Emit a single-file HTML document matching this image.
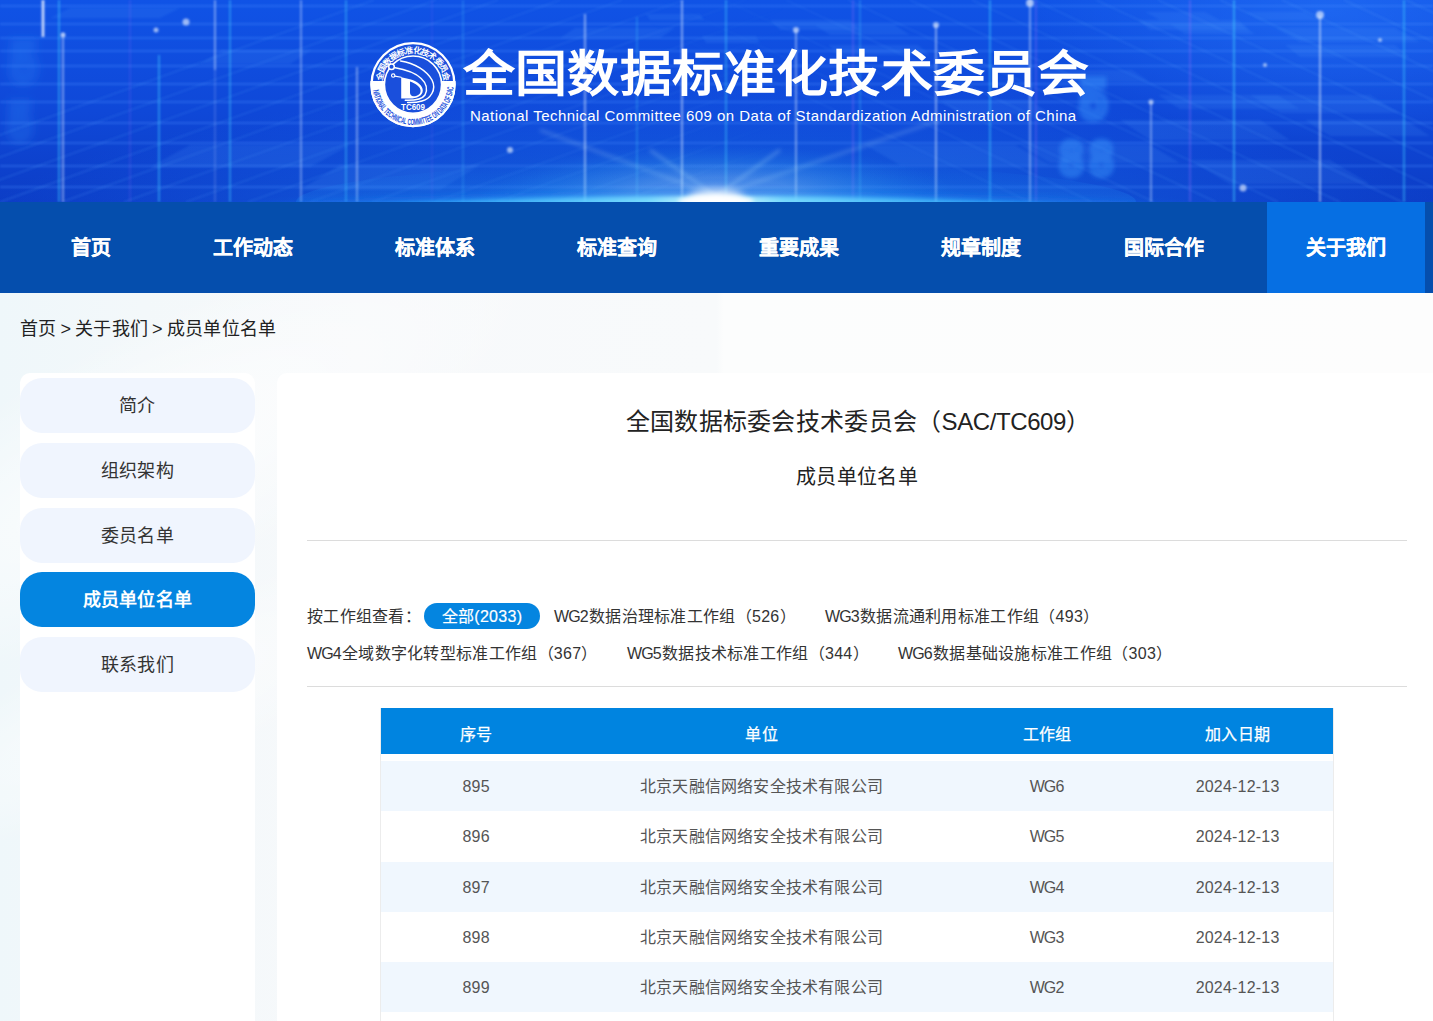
<!DOCTYPE html>
<html lang="zh-CN"><head><meta charset="utf-8">
<style>
*{margin:0;padding:0;box-sizing:border-box}
html,body{width:1433px;height:1021px;overflow:hidden}
body{font-family:"Liberation Sans",sans-serif;background:#f4f7fb;position:relative;color:#333}
.abs{position:absolute}
#hdr{left:0;top:0;width:1433px;height:202px;overflow:hidden;
 background:linear-gradient(180deg,#1650e4 0%,#1244d6 45%,#0f3cc8 100%)}
#nav{left:0;top:202px;width:1433px;height:91px;background:#054ead}
.ni{position:absolute;top:0;height:91px;line-height:93.5px;color:#fff;font-weight:bold;font-size:20px;text-align:center;-webkit-text-stroke:0.2px #fff}
#body{left:0;top:293px;width:1433px;height:728px;background:linear-gradient(90deg,#eff7fa 0%,#f3f8fa 10%,#f7f9fb 25%,#f8fafb 50%,#fcfdfd 50.5%,#fdfdfd 100%)}
.crumb{left:20px;top:315.5px;font-size:18px;letter-spacing:0.3px;color:#222;line-height:26px;white-space:nowrap;word-spacing:-1.5px}
#side{left:20px;top:373px;width:235px;height:660px;background:#fff;border-radius:10px}
.sb{position:absolute;left:20px;width:235px;height:55px;border-radius:22px;background:#f0f5fe;color:#333;font-size:18px;letter-spacing:0.3px;text-align:center;line-height:57px}
.sb.on{background:#0485e0;color:#fff;font-weight:bold}
#main{left:277px;top:373px;width:1170px;height:660px;background:#fff;border-radius:10px}
.hr{position:absolute;left:307px;width:1100px;height:1px;background:#dcdcdc}
.f{position:absolute;font-size:16px;letter-spacing:0.3px;color:#333;line-height:26px;white-space:nowrap}
.pill{position:absolute;left:424px;top:603px;width:116px;height:26px;border-radius:13px;background:#0485e0;color:#fff;font-size:16px;letter-spacing:0.3px;line-height:27.5px;text-align:center;-webkit-text-stroke:0.2px #fff}
#tbl{left:380px;top:708px;width:954px;height:320px}
.th{position:absolute;left:381px;top:708px;width:952px;height:46px;background:#0084e0}
.row{position:absolute;left:381px;width:952px;height:50px}
.c{position:absolute;top:0;height:100%;text-align:center;font-size:16px;white-space:nowrap;letter-spacing:0.2px;text-indent:0.2px}
.th .c{color:#fff;font-weight:normal;line-height:53px;-webkit-text-stroke:0.25px #fff}
.row .c{color:#555;line-height:52px}
.c1{left:0;width:190px}.c2{left:190px;width:381px}.c3{left:571px;width:190px}.c4{left:761px;width:191px}
.wg{letter-spacing:-0.9px}
</style></head><body>
<div id="hdr" class="abs"><svg width="1433" height="202" style="position:absolute;left:0;top:0">
<defs>
<linearGradient id="bg" x1="0" y1="0" x2="0" y2="1">
<stop offset="0" stop-color="#1053e6"/><stop offset="0.55" stop-color="#0f48d8"/><stop offset="1" stop-color="#0c3dc6"/></linearGradient>
<radialGradient id="gC" cx="0.5" cy="0.5" r="0.5"><stop offset="0" stop-color="#1f9bff" stop-opacity="0.75"/><stop offset="0.5" stop-color="#1a7af0" stop-opacity="0.35"/><stop offset="1" stop-color="#1a6cff" stop-opacity="0"/></radialGradient>
<radialGradient id="gT" cx="0.5" cy="0.5" r="0.5"><stop offset="0" stop-color="#2d7dff" stop-opacity="0.45"/><stop offset="1" stop-color="#2d7dff" stop-opacity="0"/></radialGradient>
<radialGradient id="gW" cx="0.5" cy="0.5" r="0.5"><stop offset="0" stop-color="#ffffff" stop-opacity="1"/><stop offset="0.35" stop-color="#d8fbff" stop-opacity="0.9"/><stop offset="0.7" stop-color="#5fd6ff" stop-opacity="0.45"/><stop offset="1" stop-color="#2fb0ff" stop-opacity="0"/></radialGradient>
<linearGradient id="vfade" x1="0" y1="0" x2="0" y2="1"><stop offset="0" stop-color="#fff" stop-opacity="1"/><stop offset="1" stop-color="#fff" stop-opacity="0.25"/></linearGradient>
<filter id="bl" x="-50%" y="-50%" width="200%" height="200%"><feGaussianBlur stdDeviation="0.9"/></filter>
<filter id="bl2" x="-50%" y="-50%" width="200%" height="200%"><feGaussianBlur stdDeviation="2"/></filter>
<filter id="bl4" x="-50%" y="-50%" width="200%" height="200%"><feGaussianBlur stdDeviation="4"/></filter>
</defs>
<rect width="1433" height="202" fill="url(#bg)"/>
<ellipse cx="1330" cy="10" rx="300" ry="130" fill="url(#gT)"/>
<ellipse cx="716" cy="250" rx="760" ry="170" fill="url(#gC)"/>
<g stroke="#4a90ff" stroke-opacity="0.33" stroke-width="1.8" filter="url(#bl)"><line x1="0" y1="6" x2="1433" y2="6"/><line x1="0" y1="24" x2="1433" y2="24"/><line x1="0" y1="38" x2="1433" y2="38"/><line x1="0" y1="51" x2="1433" y2="51"/><line x1="0" y1="66" x2="1433" y2="66"/><line x1="0" y1="84" x2="1433" y2="84"/><line x1="0" y1="102" x2="1433" y2="102"/><line x1="0" y1="123" x2="1433" y2="123"/><line x1="0" y1="143" x2="1433" y2="143"/><line x1="0" y1="166" x2="1433" y2="166"/><line x1="0" y1="187" x2="1433" y2="187"/></g>
<defs><linearGradient id="mL" x1="0" y1="0" x2="1" y2="0"><stop offset="0" stop-color="#fff" stop-opacity="1"/><stop offset="0.45" stop-color="#fff" stop-opacity="0.6"/><stop offset="0.55" stop-color="#fff" stop-opacity="0"/></linearGradient><mask id="maskL"><rect width="1433" height="202" fill="url(#mL)"/></mask><linearGradient id="mR" x1="0" y1="0" x2="1" y2="0"><stop offset="0.45" stop-color="#fff" stop-opacity="0"/><stop offset="0.6" stop-color="#fff" stop-opacity="0.6"/><stop offset="1" stop-color="#fff" stop-opacity="1"/></linearGradient><mask id="maskR"><rect width="1433" height="202" fill="url(#mR)"/></mask></defs>
<g stroke="#5aa6ff" stroke-opacity="0.22" stroke-width="1.4" filter="url(#bl)" mask="url(#maskL)"><line x1="-186" y1="202" x2="374" y2="0"/><line x1="-124" y1="202" x2="436" y2="0"/><line x1="-62" y1="202" x2="498" y2="0"/><line x1="0" y1="202" x2="560" y2="0"/><line x1="62" y1="202" x2="622" y2="0"/><line x1="124" y1="202" x2="684" y2="0"/><line x1="186" y1="202" x2="746" y2="0"/><line x1="248" y1="202" x2="808" y2="0"/><line x1="310" y1="202" x2="870" y2="0"/><line x1="372" y1="202" x2="932" y2="0"/><line x1="434" y1="202" x2="994" y2="0"/><line x1="496" y1="202" x2="1056" y2="0"/><line x1="558" y1="202" x2="1118" y2="0"/><line x1="620" y1="202" x2="1180" y2="0"/><line x1="682" y1="202" x2="1242" y2="0"/><line x1="744" y1="202" x2="1304" y2="0"/><line x1="806" y1="202" x2="1366" y2="0"/><line x1="868" y1="202" x2="1428" y2="0"/><line x1="930" y1="202" x2="1490" y2="0"/></g>
<g stroke="#5aa6ff" stroke-opacity="0.22" stroke-width="1.4" filter="url(#bl)" mask="url(#maskR)"><line x1="600" y1="0" x2="1030" y2="202"/><line x1="662" y1="0" x2="1092" y2="202"/><line x1="724" y1="0" x2="1154" y2="202"/><line x1="786" y1="0" x2="1216" y2="202"/><line x1="848" y1="0" x2="1278" y2="202"/><line x1="910" y1="0" x2="1340" y2="202"/><line x1="972" y1="0" x2="1402" y2="202"/><line x1="1034" y1="0" x2="1464" y2="202"/><line x1="1096" y1="0" x2="1526" y2="202"/><line x1="1158" y1="0" x2="1588" y2="202"/><line x1="1220" y1="0" x2="1650" y2="202"/><line x1="1282" y1="0" x2="1712" y2="202"/><line x1="1344" y1="0" x2="1774" y2="202"/><line x1="1406" y1="0" x2="1836" y2="202"/><line x1="1468" y1="0" x2="1898" y2="202"/><line x1="1530" y1="0" x2="1960" y2="202"/><line x1="1592" y1="0" x2="2022" y2="202"/><line x1="1654" y1="0" x2="2084" y2="202"/><line x1="1716" y1="0" x2="2146" y2="202"/><line x1="1778" y1="0" x2="2208" y2="202"/><line x1="1840" y1="0" x2="2270" y2="202"/><line x1="1902" y1="0" x2="2332" y2="202"/></g>
<g fill="#56a6ff" fill-opacity="0.13" filter="url(#bl)"><polygon points="50,18 160,18 180,8 70,8"/><polygon points="200,64 290,64 312,50 222,50"/><polygon points="150,167 310,167 350,145 190,145"/><polygon points="300,190 440,190 480,165 340,165"/><polygon points="560,38 660,38 675,28 575,28"/><polygon points="830,35 910,35 895,25 815,25"/><polygon points="1160,20 1220,20 1205,12 1145,12"/><polygon points="1260,20 1320,20 1305,12 1245,12"/><polygon points="1185,34 1255,34 1240,24 1170,24"/><polygon points="1300,42 1420,42 1395,28 1275,28"/><polygon points="1150,140 1290,140 1260,120 1120,120"/><polygon points="1280,113 1400,113 1370,95 1250,95"/><polygon points="900,165 1050,165 1015,145 865,145"/><polygon points="1230,184 1370,184 1330,160 1190,160"/><polygon points="1150,30 1250,30 1238,20 1138,20"/><polygon points="1300,57 1410,57 1395,45 1285,45"/><polygon points="1060,82 1150,82 1132,70 1042,70"/><polygon points="1180,109 1300,109 1278,95 1158,95"/><polygon points="1330,136 1430,136 1405,120 1305,120"/><polygon points="960,114 1050,114 1030,100 940,100"/><polygon points="1050,163 1180,163 1150,145 1020,145"/><polygon points="650,20 704,20 700,14 646,14"/><polygon points="706,43 760,43 756,36 702,36"/><polygon points="780,30 860,30 850,20 770,20"/><polygon points="840,55 930,55 918,45 828,45"/></g>
<g font-family="Liberation Sans" font-weight="bold" fill="none" stroke="#3c9cff" stroke-opacity="0.42" stroke-width="6" filter="url(#bl2)"><text transform="translate(1080,118) scale(1.0,1.15)" font-size="48">5</text><text transform="translate(1060,175) scale(0.85,1.0)" font-size="48">8</text><text transform="translate(1090,175) scale(0.85,1.0)" font-size="48">8</text></g>
<g font-family="Liberation Sans" font-weight="bold" fill="none" stroke="#3c9cff" stroke-opacity="0.22" stroke-width="6" filter="url(#bl4)"><text transform="translate(10,82) scale(1,1.2)" font-size="48">5</text><text transform="translate(8,140) scale(0.9,1.1)" font-size="48">5</text></g>
<g filter="url(#bl)"><line x1="43" y1="0" x2="43" y2="37" stroke="#f0f6ff" stroke-opacity="0.85" stroke-width="2.6"/><line x1="59" y1="0" x2="59" y2="202" stroke="#40c8ff" stroke-opacity="0.5" stroke-width="1.9"/><line x1="63" y1="33" x2="63" y2="202" stroke="#d8e6ff" stroke-opacity="0.5" stroke-width="1.9"/><line x1="130" y1="0" x2="130" y2="202" stroke="#9a6cff" stroke-opacity="0.18" stroke-width="1.7999999999999998"/><line x1="159" y1="55" x2="159" y2="202" stroke="#39c5ff" stroke-opacity="0.5" stroke-width="1.9"/><line x1="215" y1="0" x2="215" y2="70" stroke="#d0e0ff" stroke-opacity="0.5" stroke-width="1.9"/><line x1="215" y1="70" x2="215" y2="202" stroke="#d0e0ff" stroke-opacity="0.18" stroke-width="1.7999999999999998"/><line x1="230" y1="0" x2="230" y2="202" stroke="#40c8ff" stroke-opacity="0.45" stroke-width="1.9"/><line x1="301" y1="0" x2="301" y2="202" stroke="#c8dcff" stroke-opacity="0.45" stroke-width="1.9"/><line x1="346" y1="0" x2="346" y2="202" stroke="#40c8ff" stroke-opacity="0.45" stroke-width="1.9"/><line x1="357" y1="67" x2="357" y2="202" stroke="#c8dcff" stroke-opacity="0.5" stroke-width="1.9"/><line x1="432" y1="0" x2="432" y2="202" stroke="#9a6cff" stroke-opacity="0.12" stroke-width="1.7999999999999998"/><line x1="463" y1="0" x2="463" y2="202" stroke="#40c8ff" stroke-opacity="0.25" stroke-width="1.7999999999999998"/><line x1="585" y1="14" x2="585" y2="202" stroke="#d8e6ff" stroke-opacity="0.5" stroke-width="2.1"/><line x1="637" y1="17" x2="637" y2="202" stroke="#40c8ff" stroke-opacity="0.3" stroke-width="1.7999999999999998"/><line x1="682" y1="0" x2="682" y2="202" stroke="#d8e6ff" stroke-opacity="0.5" stroke-width="2.1"/><line x1="726" y1="0" x2="726" y2="202" stroke="#40c8ff" stroke-opacity="0.45" stroke-width="1.9"/><line x1="796" y1="30" x2="796" y2="202" stroke="#e0ecff" stroke-opacity="0.45" stroke-width="1.9"/><line x1="853" y1="0" x2="853" y2="202" stroke="#9a6cff" stroke-opacity="0.3" stroke-width="1.7999999999999998"/><line x1="860" y1="0" x2="860" y2="202" stroke="#40c8ff" stroke-opacity="0.3" stroke-width="1.7999999999999998"/><line x1="936" y1="25" x2="936" y2="202" stroke="#e0ecff" stroke-opacity="0.5" stroke-width="1.9"/><line x1="990" y1="0" x2="990" y2="202" stroke="#40c8ff" stroke-opacity="0.5" stroke-width="1.9"/><line x1="1030" y1="0" x2="1030" y2="202" stroke="#e0ecff" stroke-opacity="0.45" stroke-width="1.9"/><line x1="1036" y1="0" x2="1036" y2="202" stroke="#9a6cff" stroke-opacity="0.3" stroke-width="1.7999999999999998"/><line x1="1151" y1="102" x2="1151" y2="202" stroke="#d0e0ff" stroke-opacity="0.45" stroke-width="1.9"/><line x1="1190" y1="0" x2="1190" y2="202" stroke="#9a6cff" stroke-opacity="0.35" stroke-width="1.7999999999999998"/><line x1="1234" y1="0" x2="1234" y2="202" stroke="#40c8ff" stroke-opacity="0.55" stroke-width="1.9"/><line x1="1320" y1="15" x2="1320" y2="202" stroke="#e0ecff" stroke-opacity="0.55" stroke-width="1.9"/><line x1="1404" y1="0" x2="1404" y2="202" stroke="#40c8ff" stroke-opacity="0.5" stroke-width="1.9"/></g>
<g fill="#e4eeff" fill-opacity="0.65" filter="url(#bl)"><circle cx="186" cy="22" r="3.5"/><circle cx="156" cy="30" r="2.5"/><circle cx="63" cy="35" r="2.5"/><circle cx="1030" cy="3" r="4"/><circle cx="1320" cy="15" r="4"/><circle cx="936" cy="25" r="3"/><circle cx="796" cy="30" r="3"/><circle cx="1151" cy="102" r="2.5"/><circle cx="1243" cy="188" r="3.5"/><circle cx="1380" cy="40" r="2"/><circle cx="1265" cy="65" r="2"/><circle cx="510" cy="150" r="3"/></g>
<g stroke="#c8f0ff" stroke-width="2" filter="url(#bl2)">
<line x1="716" y1="196" x2="540" y2="130" stroke-opacity="0.3"/><line x1="716" y1="196" x2="650" y2="150" stroke-opacity="0.4"/>
<line x1="716" y1="196" x2="780" y2="150" stroke-opacity="0.4"/><line x1="716" y1="196" x2="940" y2="120" stroke-opacity="0.3"/>
</g>
<defs><linearGradient id="hz" x1="0" y1="0" x2="1" y2="0"><stop offset="0" stop-color="#3fc0ff" stop-opacity="0"/><stop offset="0.25" stop-color="#3fc8ff" stop-opacity="0.55"/><stop offset="0.44" stop-color="#7ee2ff" stop-opacity="0.9"/><stop offset="0.5" stop-color="#e8fcff" stop-opacity="1"/><stop offset="0.56" stop-color="#7ee2ff" stop-opacity="0.9"/><stop offset="0.75" stop-color="#3fc8ff" stop-opacity="0.55"/><stop offset="1" stop-color="#3fc0ff" stop-opacity="0"/></linearGradient></defs>
<ellipse cx="716" cy="195" rx="240" ry="50" fill="url(#gW)" opacity="0.28"/>
<defs><linearGradient id="bt" x1="0" y1="0" x2="0" y2="1"><stop offset="0" stop-color="#1f8cf5" stop-opacity="0"/><stop offset="1" stop-color="#2aa0ff" stop-opacity="0.45"/></linearGradient></defs><ellipse cx="716" cy="202" rx="420" ry="40" fill="url(#bt)"/>
<ellipse cx="716" cy="238" rx="640" ry="44" fill="#2f9cff" fill-opacity="0.35" filter="url(#bl4)"/>
<ellipse cx="716" cy="236" rx="560" ry="40" fill="url(#hz)" filter="url(#bl2)"/>
<ellipse cx="716" cy="201" rx="38" ry="5" fill="#ffffff" fill-opacity="0.95" filter="url(#bl2)"/>
<ellipse cx="716" cy="198" rx="28" ry="9" fill="#ffffff" fill-opacity="0.8" filter="url(#bl4)"/>
</svg><svg width="1433" height="202" style="position:absolute;left:0;top:0">
<defs>
<clipPath id="lowc"><rect x="360" y="81" width="110" height="60"/></clipPath>
<path id="arcTop" d="M 381.62,85.70 A 31.4 31.4 0 1 1 444.38,85.70"/>
<path id="arcBot" d="M 372.41,85.31 A 40.6 40.6 0 0 0 453.59,85.31"/>
</defs>
<circle cx="413" cy="84.6" r="42.6" fill="#1a4fdc"/>
<g clip-path="url(#lowc)"><circle cx="413" cy="84.6" r="35.7" fill="none" stroke="#fff" stroke-width="14"/></g>
<circle cx="413" cy="84.6" r="41.5" fill="none" stroke="#fff" stroke-width="2.3"/>
<circle cx="413" cy="84.6" r="28.6" fill="none" stroke="#fff" stroke-width="1.6"/>
<text font-family="Liberation Sans" font-size="8.4" font-weight="bold" fill="#fff"><textPath href="#arcTop" startOffset="5.0" textLength="90.8" lengthAdjust="spacing">全国数据标准化技术委员会</textPath></text>
<text font-family="Liberation Sans" font-size="9" font-weight="bold" fill="#1a4fdc"><textPath href="#arcBot" startOffset="5.2" textLength="118.6" lengthAdjust="spacingAndGlyphs">NATIONAL TECHNICAL COMMITTEE ON DATA OF SAC</textPath></text>
<g fill="none" stroke="#fff" stroke-linecap="round">
<path d="M400.6,60.9 C415,63 427,71 432,80 C437,90 430,99 422,101 C416,102.6 410,102.6 407.6,102.4" stroke-width="1.5"/>
<path d="M394.1,67.6 C405,69.5 416,73.5 421.2,78.5 C426,83 428,89 425,95 C422,99.5 412,100.5 405.3,100.3" stroke-width="1.5"/>
<circle cx="391.5" cy="66.8" r="2.8" stroke-width="1.5" fill="#1a4fdc"/>
<circle cx="393.2" cy="75.6" r="1.7" stroke-width="1.1" fill="#1a4fdc"/>
<path d="M394.8,76.1 L401.2,77.3" stroke-width="1.1"/>
</g>
<path fill="#fff" fill-rule="evenodd" d="M401.2,77.2 L410,79.2 C417,81 423,85.5 422.8,90.5 C422.5,96 417,98.6 410,98.6 L401.2,98.6 Z M410,81.6 C415.5,83.4 420.8,87 420.6,91 C420.4,94.8 416.5,96.4 413.5,96.3 C411.2,96.1 410,94.5 410,92.5 Z"/>
<text x="401" y="110.3" font-family="Liberation Sans" font-size="8.4" font-weight="bold" fill="#fff" textLength="24" lengthAdjust="spacingAndGlyphs">TC609</text>
</svg>
<div class="abs" style="left:463px;top:39.3px;font-size:52px;font-weight:bold;color:#fff;line-height:70px;white-space:nowrap;letter-spacing:0.2px;transform:scaleY(0.935);transform-origin:0 32.5px">全国数据标准化技术委员会</div>
<div class="abs" id="sub" style="left:470px;top:105.5px;font-size:15px;color:#fff;line-height:20px;white-space:nowrap;letter-spacing:0.47px">National Technical Committee 609 on Data of Standardization Administration of China</div>
</div>
<div id="nav" class="abs">
 <div class="ni" style="left:32px;width:118px">首页</div>
 <div class="ni" style="left:174px;width:158px">工作动态</div>
 <div class="ni" style="left:356px;width:158px">标准体系</div>
 <div class="ni" style="left:538px;width:158px">标准查询</div>
 <div class="ni" style="left:720px;width:158px">重要成果</div>
 <div class="ni" style="left:902px;width:158px">规章制度</div>
 <div class="ni" style="left:1085px;width:158px">国际合作</div>
 <div class="ni" style="left:1267px;width:158px;background:#066fe3">关于我们</div>
</div>
<div id="body" class="abs" style="overflow:hidden"><div style="position:absolute;left:-300px;top:40px;width:900px;height:260px;border-radius:50%;transform:rotate(-28deg);background:radial-gradient(closest-side,rgba(255,255,255,0.75),rgba(255,255,255,0))"></div><div style="position:absolute;left:-200px;top:330px;width:700px;height:160px;border-radius:50%;transform:rotate(-25deg);background:radial-gradient(closest-side,rgba(255,255,255,0.6),rgba(255,255,255,0))"></div></div>
<div class="abs crumb">首页 &gt; 关于我们 &gt; 成员单位名单</div>
<div id="side" class="abs"></div>
<div class="sb" style="top:378px">简介</div>
<div class="sb" style="top:443px">组织架构</div>
<div class="sb" style="top:508px">委员名单</div>
<div class="sb on" style="top:572px">成员单位名单</div>
<div class="sb" style="top:637px">联系我们</div>
<div id="main" class="abs"></div>
<div class="abs" style="left:280px;width:1156px;top:406.5px;text-align:center;font-size:24px;letter-spacing:0.3px;color:#222;line-height:30px">全国数据标委会技术委员会（<span style="letter-spacing:-0.4px">SAC/TC609</span>）</div>
<div class="abs" style="left:279px;width:1156px;top:463.5px;text-align:center;font-size:20px;letter-spacing:0.3px;color:#222;line-height:26px">成员单位名单</div>
<div class="hr" style="top:540px"></div>
<div class="f" style="left:307px;top:604px">按工作组查看：</div>
<div class="pill">全部(2033)</div>
<div class="f" style="left:554px;top:604px"><span class="wg">WG</span>2数据治理标准工作组（526）</div>
<div class="f" style="left:825px;top:604px"><span class="wg">WG</span>3数据流通利用标准工作组（493）</div>
<div class="f" style="left:307px;top:641px"><span class="wg">WG</span>4全域数字化转型标准工作组（367）</div>
<div class="f" style="left:627px;top:641px"><span class="wg">WG</span>5数据技术标准工作组（344）</div>
<div class="f" style="left:898px;top:641px"><span class="wg">WG</span>6数据基础设施标准工作组（303）</div>
<div class="hr" style="top:686px"></div>
<div class="abs" style="left:380px;top:708px;width:954px;height:320px;border-left:1px solid #ececec;border-right:1px solid #ececec;background:#fff"></div>
<div class="th"><div class="c c1">序号</div><div class="c c2">单位</div><div class="c c3">工作组</div><div class="c c4">加入日期</div></div>
<div class="row" style="top:761px;background:#f0f7fe"><div class="c c1">895</div><div class="c c2">北京天融信网络安全技术有限公司</div><div class="c c3"><span class="wg">WG</span>6</div><div class="c c4">2024-12-13</div></div>
<div class="row" style="top:811px"><div class="c c1">896</div><div class="c c2">北京天融信网络安全技术有限公司</div><div class="c c3"><span class="wg">WG</span>5</div><div class="c c4">2024-12-13</div></div>
<div class="row" style="top:862px;background:#f0f7fe"><div class="c c1">897</div><div class="c c2">北京天融信网络安全技术有限公司</div><div class="c c3"><span class="wg">WG</span>4</div><div class="c c4">2024-12-13</div></div>
<div class="row" style="top:912px"><div class="c c1">898</div><div class="c c2">北京天融信网络安全技术有限公司</div><div class="c c3"><span class="wg">WG</span>3</div><div class="c c4">2024-12-13</div></div>
<div class="row" style="top:962px;background:#f0f7fe"><div class="c c1">899</div><div class="c c2">北京天融信网络安全技术有限公司</div><div class="c c3"><span class="wg">WG</span>2</div><div class="c c4">2024-12-13</div></div>
</body></html>
